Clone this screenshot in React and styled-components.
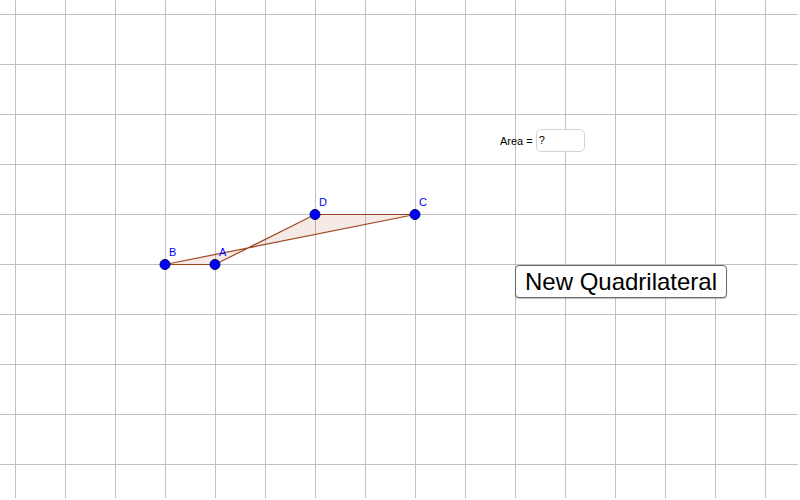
import React from 'react'
import styled, { createGlobalStyle } from 'styled-components'

const GlobalStyle = createGlobalStyle`
  html, body {
    margin: 0;
    padding: 0;
    background: #ffffff;
    font-family: "Liberation Sans", Arial, sans-serif;
  }
`

const Canvas = styled.div`
  position: relative;
  width: 800px;
  height: 500px;
  overflow: hidden;
  background: #ffffff;
`

const Board = styled.svg`
  display: block;
`

const AreaBox = styled.div`
  position: absolute;
  left: 500px;
  top: 129px;
  display: flex;
  align-items: center;
  gap: 3px;
  font-size: 11px;
  color: #000;
`

const AreaInput = styled.div`
  width: 49px;
  height: 23px;
  box-sizing: border-box;
  border: 1px solid #d4d4d4;
  border-radius: 5px;
  background: #fff;
  padding: 4px 2px;
  font-size: 11px;
  line-height: 13px;
`

const ActionButton = styled.button`
  position: absolute;
  left: 515px;
  top: 265px;
  width: 212px;
  height: 33px;
  box-sizing: border-box;
  padding: 0;
  background: #fff;
  border: 1px solid #6a6a6a;
  border-radius: 4px;
  font-family: "Liberation Sans", Arial, sans-serif;
  font-size: 24px;
  color: #000;
  box-shadow: 0 1px 1px rgba(0, 0, 0, 0.25);
`

const xs = Array.from({ length: 16 }, (_, i) => 15 + i * 50)
const ys = Array.from({ length: 10 }, (_, i) => 14.5 + i * 50)

const points = [
  { id: 'A', x: 215, y: 264.5 },
  { id: 'B', x: 165, y: 264.5 },
  { id: 'C', x: 415, y: 214.5 },
  { id: 'D', x: 315, y: 214.5 },
]

const App = () => {
  const poly = points.map((p) => `${p.x},${p.y}`).join(' ')
  return (
    <Canvas>
      <GlobalStyle />
      <Board width="800" height="500">
        {xs.map((x) => (
          <line key={'v' + x} x1={x + 0.5} y1="0" x2={x + 0.5} y2="498" stroke="#c0c0c0" strokeWidth="1" />
        ))}
        {ys.map((y) => (
          <line key={'h' + y} x1="0" y1={y} x2="798" y2={y} stroke="#c0c0c0" strokeWidth="1" />
        ))}
        <polygon
          points={poly}
          fill="rgba(153, 51, 0, 0.1)"
          fillRule="evenodd"
          stroke="#a0461e"
          strokeWidth="1.2"
        />
        {points.map((p) => (
          <g key={p.id}>
            <circle cx={p.x} cy={p.y} r="5" fill="#0000ff" stroke="#000066" strokeWidth="1" />
            <text
              x={p.x + 4}
              y={p.y - 9}
              fill="#0000ff"
              fontSize="11"
              fontFamily="Liberation Sans, Arial, sans-serif"
            >
              {p.id}
            </text>
          </g>
        ))}
      </Board>
      <AreaBox>
        Area =
        <AreaInput>?</AreaInput>
      </AreaBox>
      <ActionButton>New Quadrilateral</ActionButton>
    </Canvas>
  )
}

export default App
